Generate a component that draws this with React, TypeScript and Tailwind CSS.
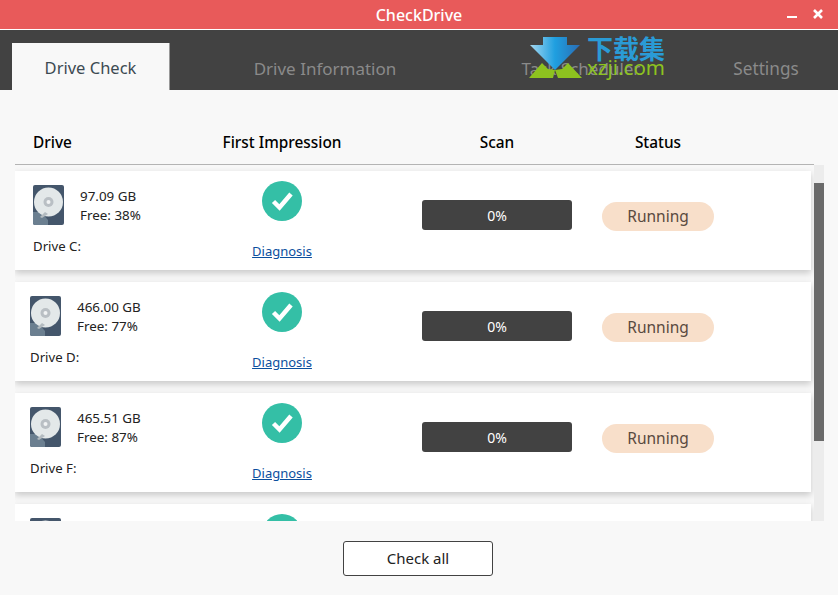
const drives = [
    { size: "97.09 GB", free: "Free: 38%", name: "Drive C:", indent: "pl-[18px]" },
    { size: "466.00 GB", free: "Free: 77%", name: "Drive D:", indent: "pl-[15px]" },
    { size: "465.51 GB", free: "Free: 87%", name: "Drive F:", indent: "pl-[15px]" },
]

function DiskIcon() {
    return (
        <svg width="31" height="40" viewBox="0 0 31 40" className="shrink-0">
            <rect width="31" height="40" rx="2" fill="#44566b" />
            <path d="M0 27 L8 27 L15 35 L15 40 L2 40 Q0 40 0 38 Z" fill="#6b7f90" />
            <circle cx="15.5" cy="17" r="14.5" fill="#e3e8e9" />
            <circle cx="15.5" cy="17" r="5" fill="#b9bfc4" />
            <circle cx="15.5" cy="17" r="2" fill="#f1f3f4" />
            <path d="M7 32 L12 27 L15 29 L9 33 Z" fill="#b3bbc0" />
        </svg>
    )
}

function CheckIcon() {
    return (
        <svg width="40" height="40" viewBox="0 0 40 40">
            <circle cx="20" cy="20" r="20" fill="#34bfa6" />
            <path d="M11.5 20.5 L17.5 26.5 L29 13" fill="none" stroke="#ffffff" strokeWidth="4.5" />
        </svg>
    )
}

function DriveRow({ drive }: { drive: (typeof drives)[number] }) {
    return (
        <div className="w-[796px] h-[99px] shrink-0 bg-white flex shadow-[0_3px_7px_rgba(0,0,0,0.2)]">
            <div className={`w-[187px] pt-[14px] ${drive.indent}`}>
                <div className="flex">
                    <DiskIcon />
                    <div className="ml-4 text-[13.4px] leading-[19px] text-[#222] pt-[2px]">
                        <div>{drive.size}</div>
                        <div>{drive.free}</div>
                    </div>
                </div>
                <div className="mt-[12px] text-[13.2px] leading-[19px] text-[#222]">{drive.name}</div>
            </div>
            <div className="w-[160px] pt-[10px] flex flex-col items-center">
                <CheckIcon />
                <a className="mt-[21px] text-[13px] leading-[19px] text-[#0b4f9e] underline">Diagnosis</a>
            </div>
            <div className="ml-[60px] mt-[29px] w-[150px] h-[30px] rounded-[3px] bg-[#424242] text-white text-[14px] flex items-center justify-center">
                0%
            </div>
            <div className="ml-[30px] mt-[31px] w-[112px] h-[29px] pt-[1px] rounded-full bg-[#f8dfca] text-[#5a4a40] text-[15.5px] flex items-center justify-center">
                Running
            </div>
        </div>
    )
}

// the fourth row is cut by the list edge: only the tops of its icons show
function PartialRow() {
    return (
        <div className="w-[796px] h-[99px] shrink-0 bg-white flex shadow-[0_3px_7px_rgba(0,0,0,0.2)]">
            <div className="w-[187px] pt-[14px] pl-[15px]">
                <DiskIcon />
            </div>
            <div className="w-[160px] pt-[10px] flex flex-col items-center">
                <CheckIcon />
            </div>
        </div>
    )
}

export default function App() {
    return (
        <div className="relative w-[838px] h-[595px] overflow-hidden flex flex-col bg-[#f8f8f8] font-['Noto_Sans','Open_Sans',sans-serif]">
            {/* title bar */}
            <div className="h-[30px] shrink-0 bg-[#e85a5a] border-b border-white flex items-center justify-center relative text-white text-[16px] font-medium">
                CheckDrive
                <div className="absolute right-[15px] top-[9px] flex items-start gap-[16px]">
                    <svg width="10" height="10" viewBox="0 0 10 10"><rect y="7" width="10" height="2" fill="#fff" /></svg>
                    <svg width="10" height="10" viewBox="0 0 10 10"><path d="M1 1 L9 9 M9 1 L1 9" stroke="#fff" strokeWidth="2.6" /></svg>
                </div>
            </div>

            {/* tabs */}
            <div className="h-[60px] shrink-0 bg-[#424242] flex items-end pl-[12px]">
                <div className="w-[158px] h-[47px] bg-[#f8f8f8] border-r border-[#999] flex items-center justify-center pt-[3px] text-[16.5px] text-[#3c4a52]">
                    Drive Check
                </div>
                <div className="w-[310px] h-[47px] flex items-center justify-center pt-[4px] text-[17px] text-[#8a8a8a]">Drive Information</div>
                <div className="w-[202px] h-[47px] flex items-center justify-center pt-[4px] text-[17px] text-[#8a8a8a]">Task Scheduler</div>
                <div className="ml-[12px] w-[144px] h-[47px] flex items-center justify-center pt-[4px] text-[17.2px] text-[#8a8a8a]">Settings</div>
            </div>

            {/* table header */}
            <div className="mt-[38px] ml-[15px] w-[799px] h-[37px] shrink-0 border-b border-[#b4b4b4] flex items-center pb-[6px] text-[15.4px] font-medium text-black">
                <div className="w-[187px] pl-[18px]">Drive</div>
                <div className="w-[160px] text-center">First Impression</div>
                <div className="ml-[60px] w-[150px] text-center">Scan</div>
                <div className="ml-[12px] w-[148px] text-center">Status</div>
            </div>

            {/* list */}
            <div className="ml-[15px] h-[356px] shrink-0 flex">
                <div className="w-[799px] h-[356px] overflow-hidden flex flex-col gap-[12px] pt-[6px]">
                    {drives.map(drive => (
                        <DriveRow key={drive.name} drive={drive} />
                    ))}
                    <PartialRow />
                </div>
                <div className="w-[10px] h-[356px] bg-[#ececec] pt-[18px]">
                    <div className="h-[258px] bg-[#6a6a6a]"></div>
                </div>
            </div>

            {/* footer */}
            <div className="flex-1 flex justify-center pt-[20px] pr-[2px]">
                <button className="w-[150px] h-[35px] bg-white border border-[#424242] rounded-[3px] text-[15px] text-[#222]">
                    Check all
                </button>
            </div>

            {/* download site watermark */}
            <div className="absolute left-[529px] top-[36px] flex">
                <svg width="54" height="43" viewBox="0 0 54 43">
                    <defs>
                        <linearGradient id="arrow" x1="0" x2="1" y1="0" y2="0">
                            <stop offset="0" stopColor="#a5d8f0" />
                            <stop offset="0.5" stopColor="#1f9fe0" />
                            <stop offset="1" stopColor="#2a6db5" />
                        </linearGradient>
                    </defs>
                    <path d="M14 1 L38 1 L38 9 L51 9 L26 34 L1 9 L14 9 Z" fill="url(#arrow)" />
                    <path d="M0 42 L13 27 L19 33 L26 34 L24 42 Z" fill="#8dc21f" />
                    <path d="M29 42 L26 34 L33 33 L39 27 L53 42 Z" fill="#8dc21f" />
                </svg>
                <div className="ml-[4px] flex flex-col items-start">
                    <div className="text-[26px] leading-[24px] font-bold text-[#2a9bd6] font-['Noto_Sans_CJK_SC',sans-serif]">下载集</div>
                    <div className="text-[20.5px] leading-[18px] -mt-[2px] text-[#8dc21f] font-['Noto_Sans',sans-serif]">xzji.com</div>
                </div>
            </div>
        </div>
    )
}
